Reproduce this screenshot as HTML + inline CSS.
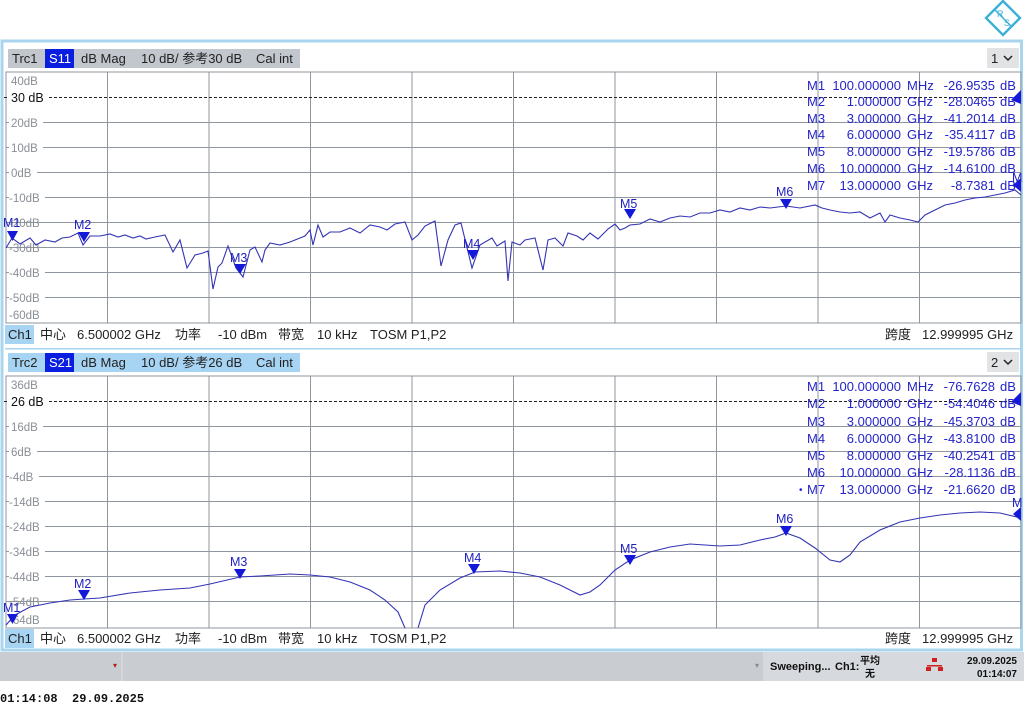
<!DOCTYPE html>
<html><head><meta charset="utf-8"><style>
html,body{margin:0;padding:0;background:#fff;width:1024px;height:706px;overflow:hidden}
svg{display:block}
text{font-family:"Liberation Sans","Noto Sans CJK SC",sans-serif}
.ax{font-size:11.5px;fill:#8a8f96}
.hd{font-size:13px;fill:#222}
.mk{font-size:13px;fill:#2424c8}
.ml{font-size:12.5px;fill:#2020c0}
</style></head><body>
<svg width="1024" height="706" viewBox="0 0 1024 706" xmlns="http://www.w3.org/2000/svg">
<!-- logo -->
<g transform="translate(1003,18)">
<rect x="-12" y="-12" width="24" height="24" transform="rotate(45)" fill="none" stroke="#3ab0d8" stroke-width="2.4"/>
<line x1="-8" y1="-8" x2="8" y2="8" stroke="#3ab0d8" stroke-width="1.5"/>
<text x="-6" y="-1" font-size="9" fill="#3ab0d8">R</text><text x="1" y="8" font-size="9" fill="#3ab0d8">S</text>
</g>
<!-- outer frame -->
<rect x="2" y="41" width="1019.5" height="609" fill="#fff" stroke="#a9d6ee" stroke-width="3"/>
<!-- ===== Panel 1 ===== -->
<rect x="8" y="49" width="292" height="19" fill="#c2c6cd"/>
<rect x="45" y="49" width="29" height="19" fill="#0a1ee0"/>
<text class="hd" x="12" y="63">Trc1</text>
<text class="hd" x="49" y="63" style="fill:#fff">S11</text>
<text class="hd" x="81" y="63">dB Mag</text>
<text class="hd" x="141" y="63">10 dB/ 参考30 dB</text>
<text class="hd" x="256" y="63">Cal int</text>
<rect x="987" y="48" width="32" height="20" fill="#e2e3e5"/>
<text class="hd" x="991" y="63">1</text>
<path d="M1004 56 l4 4 l4 -4" fill="none" stroke="#222" stroke-width="1.5"/>
<rect x="6" y="72" width="1015" height="251" fill="none" stroke="#8f969f" stroke-width="1"/>
<g stroke="#8f969f" stroke-width="1">
<line x1="107.5" y1="72" x2="107.5" y2="323"/><line x1="209" y1="72" x2="209" y2="323"/><line x1="310.5" y1="72" x2="310.5" y2="323"/><line x1="412" y1="72" x2="412" y2="323"/><line x1="513.5" y1="72" x2="513.5" y2="323"/><line x1="615" y1="72" x2="615" y2="323"/><line x1="716.5" y1="72" x2="716.5" y2="323"/><line x1="818" y1="72" x2="818" y2="323"/><line x1="919.5" y1="72" x2="919.5" y2="323"/>
<line x1="6" y1="122.5" x2="1021" y2="122.5"/><line x1="6" y1="147.5" x2="1021" y2="147.5"/><line x1="6" y1="172.5" x2="1021" y2="172.5"/><line x1="6" y1="197.5" x2="1021" y2="197.5"/><line x1="6" y1="222.5" x2="1021" y2="222.5"/><line x1="6" y1="247.5" x2="1021" y2="247.5"/><line x1="6" y1="272.5" x2="1021" y2="272.5"/><line x1="6" y1="297.5" x2="1021" y2="297.5"/>
</g>
<line x1="4" y1="97.5" x2="1021" y2="97.5" stroke="#222" stroke-dasharray="3,2"/>
<g>
<rect x="9" y="75" width="32" height="12" fill="#fff"/><text class="ax" x="11" y="85">40dB</text>
<rect x="9" y="91" width="38" height="13" fill="#fff"/><text x="11" y="102" font-size="12.5" fill="#111">30 dB</text>
<rect x="9" y="116" width="34" height="12" fill="#fff"/><text class="ax" x="11" y="127">20dB</text>
<rect x="9" y="141" width="34" height="12" fill="#fff"/><text class="ax" x="11" y="152">10dB</text>
<rect x="9" y="166" width="28" height="12" fill="#fff"/><text class="ax" x="11" y="177">0dB</text>
<rect x="9" y="191" width="36" height="12" fill="#fff"/><text class="ax" x="9" y="202">-10dB</text>
<text class="ax" x="9" y="227">-20dB</text>
<text class="ax" x="9" y="252">-30dB</text>
<rect x="9" y="266" width="36" height="12" fill="#fff"/><text class="ax" x="9" y="277">-40dB</text>
<rect x="9" y="291" width="36" height="12" fill="#fff"/><text class="ax" x="9" y="302">-50dB</text>
<rect x="9" y="309" width="36" height="12" fill="#fff"/><text class="ax" x="9" y="319">-60dB</text>
</g>
<polyline fill="none" stroke="#3434b4" stroke-width="1.1" points="6,248 12,238 20,244 30,238 36,245 45,240 55,242 62,238 70,237 78,233 83,245 90,236 100,236 110,234 118,237 125,235 133,238 140,236 146,239 155,237 165,235 173,252 180,240 187,268 195,255 203,253 208,251 213,289 218,267 222,263 228,246 236,268 243,277 250,250 255,247 262,262 265,250 270,243 280,245 290,242 300,238 305,236 310,230 313,245 318,225 323,237 330,232 340,232 350,228 360,233 370,225 380,227 387,230 395,224 405,222 412,240 418,235 425,226 435,221 441,266 448,240 455,225 461,223 472,268 480,245 492,238 497,246 505,241 508,281 512,242 520,245 525,240 535,238 543,270 548,240 555,238 563,246 568,233 577,236 583,240 590,233 598,239 608,229 615,224 620,230 625,228 630,225 640,224 650,219 660,222 670,218 680,216 690,217 700,213 710,213 720,210 730,212 740,208 750,210 760,207 770,208 786,206 800,208 815,205 822,208 830,210 840,212 850,213 860,212 870,218 880,213 885,222 890,215 900,218 910,220 918,222 925,215 935,210 945,205 955,203 965,200 975,198 985,197 995,195 1005,193 1015,190 1021,195"/>
<g fill="#1418d8">
<path d="M7,231 h11 l-5.5,10z"/><path d="M78,232 h12 l-6,10z"/><path d="M234,264 h12 l-6,10z"/><path d="M467,250 h12 l-6,10z"/><path d="M624,209 h12 l-6,10z"/><path d="M780,199 h12 l-6,10z"/><path d="M1021,178 v14 l-8,-7z"/><path d="M1021,90 v14 l-10,-4z"/>
</g>
<g class="ml"><text x="3" y="227">M1</text><text x="74" y="229">M2</text><text x="230" y="262">M3</text><text x="463" y="248">M4</text><text x="620" y="208">M5</text><text x="776" y="196">M6</text><text x="1012" y="182">M</text></g>
<g class="mk">
<text x="807" y="90">M1</text><text x="807" y="106">M2</text><text x="807" y="123">M3</text><text x="807" y="139">M4</text><text x="807" y="156">M5</text><text x="807" y="173">M6</text><text x="807" y="190">M7</text>
<g text-anchor="end"><text x="901" y="90">100.000000</text><text x="901" y="106">1.000000</text><text x="901" y="123">3.000000</text><text x="901" y="139">6.000000</text><text x="901" y="156">8.000000</text><text x="901" y="173">10.000000</text><text x="901" y="190">13.000000</text>
<text x="995" y="90">-26.9535</text><text x="995" y="106">-28.0465</text><text x="995" y="123">-41.2014</text><text x="995" y="139">-35.4117</text><text x="995" y="156">-19.5786</text><text x="995" y="173">-14.6100</text><text x="995" y="190">-8.7381</text></g>
<text x="907" y="90">MHz</text><text x="907" y="106">GHz</text><text x="907" y="123">GHz</text><text x="907" y="139">GHz</text><text x="907" y="156">GHz</text><text x="907" y="173">GHz</text><text x="907" y="190">GHz</text>
<text x="1000" y="90">dB</text><text x="1000" y="106">dB</text><text x="1000" y="123">dB</text><text x="1000" y="139">dB</text><text x="1000" y="156">dB</text><text x="1000" y="173">dB</text><text x="1000" y="190">dB</text>
</g>
<rect x="5" y="325" width="29" height="19" fill="#a6d4f2"/>
<g class="hd">
<text x="8" y="339">Ch1</text>
<text x="40" y="339">中心</text><text x="77" y="339">6.500002 GHz</text><text x="175" y="339">功率</text><text x="218" y="339">-10 dBm</text><text x="278" y="339">带宽</text><text x="317" y="339">10 kHz</text><text x="370" y="339">TOSM P1,P2</text>
<text x="885" y="339">跨度</text><text x="922" y="339">12.999995 GHz</text>
</g>
<!-- ===== Panel 2 ===== -->
<rect x="5" y="348" width="1016" height="1.5" fill="#a9d6ee"/>
<rect x="8" y="353" width="292" height="19" fill="#a6d4f2"/>
<rect x="45" y="353" width="29" height="19" fill="#0a1ee0"/>
<text class="hd" x="12" y="367">Trc2</text>
<text class="hd" x="49" y="367" style="fill:#fff">S21</text>
<text class="hd" x="81" y="367">dB Mag</text>
<text class="hd" x="141" y="367">10 dB/ 参考26 dB</text>
<text class="hd" x="256" y="367">Cal int</text>
<rect x="987" y="352" width="32" height="20" fill="#e2e3e5"/>
<text class="hd" x="991" y="367">2</text>
<path d="M1004 360 l4 4 l4 -4" fill="none" stroke="#222" stroke-width="1.5"/>
<rect x="6" y="376" width="1015" height="252" fill="none" stroke="#8f969f" stroke-width="1"/>
<g stroke="#8f969f" stroke-width="1">
<line x1="107.5" y1="376" x2="107.5" y2="628"/><line x1="209" y1="376" x2="209" y2="628"/><line x1="310.5" y1="376" x2="310.5" y2="628"/><line x1="412" y1="376" x2="412" y2="628"/><line x1="513.5" y1="376" x2="513.5" y2="628"/><line x1="615" y1="376" x2="615" y2="628"/><line x1="716.5" y1="376" x2="716.5" y2="628"/><line x1="818" y1="376" x2="818" y2="628"/><line x1="919.5" y1="376" x2="919.5" y2="628"/>
<line x1="6" y1="426.5" x2="1021" y2="426.5"/><line x1="6" y1="451.5" x2="1021" y2="451.5"/><line x1="6" y1="476.5" x2="1021" y2="476.5"/><line x1="6" y1="501.5" x2="1021" y2="501.5"/><line x1="6" y1="526.5" x2="1021" y2="526.5"/><line x1="6" y1="551.5" x2="1021" y2="551.5"/><line x1="6" y1="576.5" x2="1021" y2="576.5"/><line x1="6" y1="601.5" x2="1021" y2="601.5"/>
</g>
<line x1="4" y1="401.5" x2="1021" y2="401.5" stroke="#222" stroke-dasharray="3,2"/>
<g>
<rect x="9" y="379" width="32" height="12" fill="#fff"/><text class="ax" x="11" y="389">36dB</text>
<rect x="9" y="395" width="38" height="13" fill="#fff"/><text x="11" y="406" font-size="12.5" fill="#111">26 dB</text>
<rect x="9" y="420" width="34" height="12" fill="#fff"/><text class="ax" x="11" y="431">16dB</text>
<rect x="9" y="445" width="28" height="12" fill="#fff"/><text class="ax" x="11" y="456">6dB</text>
<rect x="9" y="470" width="30" height="12" fill="#fff"/><text class="ax" x="9" y="481">-4dB</text>
<rect x="9" y="495" width="36" height="12" fill="#fff"/><text class="ax" x="9" y="506">-14dB</text>
<rect x="9" y="520" width="36" height="12" fill="#fff"/><text class="ax" x="9" y="531">-24dB</text>
<rect x="9" y="545" width="36" height="12" fill="#fff"/><text class="ax" x="9" y="556">-34dB</text>
<rect x="9" y="570" width="36" height="12" fill="#fff"/><text class="ax" x="9" y="581">-44dB</text>
<text class="ax" x="9" y="606">-54dB</text>
<text class="ax" x="9" y="624">-64dB</text>
</g>
<polyline fill="none" stroke="#3434b4" stroke-width="1.1" points="6,625 15,615 30,607 50,603 70,600 84,599 100,598 130,593 160,590 190,588 210,584 240,577 260,576 290,574 310,575 330,577 350,582 370,590 385,600 398,612 405,628"/>
<polyline fill="none" stroke="#3434b4" stroke-width="1.1" points="418,628 425,605 440,590 460,578 475,572 500,571 520,573 540,577 560,585 580,595 590,592 600,585 615,570 630,560 650,552 670,547 690,544 705,545 720,546 740,545 760,540 775,537 786,533 800,538 815,548 830,560 840,562 850,555 860,542 880,530 900,522 920,518 940,515 960,513 980,512 1000,513 1021,518"/>
<g fill="#1418d8">
<path d="M7,614 h11 l-5.5,10z"/><path d="M78,590 h12 l-6,10z"/><path d="M234,569 h12 l-6,10z"/><path d="M468,564 h12 l-6,10z"/><path d="M624,555 h12 l-6,10z"/><path d="M780,526 h12 l-6,10z"/><path d="M1021,507 v14 l-8,-7z"/><path d="M1021,392 v14 l-10,-4z"/>
</g>
<g class="ml"><text x="3" y="612">M1</text><text x="74" y="588">M2</text><text x="230" y="566">M3</text><text x="464" y="562">M4</text><text x="620" y="553">M5</text><text x="776" y="523">M6</text><text x="1012" y="507">M</text></g>
<g class="mk">
<text x="807" y="391">M1</text><text x="807" y="408">M2</text><text x="807" y="426">M3</text><text x="807" y="443">M4</text><text x="807" y="460">M5</text><text x="807" y="477">M6</text><text x="807" y="494">M7</text><text x="799" y="493" font-size="10">•</text>
<g text-anchor="end"><text x="901" y="391">100.000000</text><text x="901" y="408">1.000000</text><text x="901" y="426">3.000000</text><text x="901" y="443">6.000000</text><text x="901" y="460">8.000000</text><text x="901" y="477">10.000000</text><text x="901" y="494">13.000000</text>
<text x="995" y="391">-76.7628</text><text x="995" y="408">-54.4046</text><text x="995" y="426">-45.3703</text><text x="995" y="443">-43.8100</text><text x="995" y="460">-40.2541</text><text x="995" y="477">-28.1136</text><text x="995" y="494">-21.6620</text></g>
<text x="907" y="391">MHz</text><text x="907" y="408">GHz</text><text x="907" y="426">GHz</text><text x="907" y="443">GHz</text><text x="907" y="460">GHz</text><text x="907" y="477">GHz</text><text x="907" y="494">GHz</text>
<text x="1000" y="391">dB</text><text x="1000" y="408">dB</text><text x="1000" y="426">dB</text><text x="1000" y="443">dB</text><text x="1000" y="460">dB</text><text x="1000" y="477">dB</text><text x="1000" y="494">dB</text>
</g>
<rect x="5" y="629" width="29" height="19" fill="#a6d4f2"/>
<g class="hd">
<text x="8" y="643">Ch1</text>
<text x="40" y="643">中心</text><text x="77" y="643">6.500002 GHz</text><text x="175" y="643">功率</text><text x="218" y="643">-10 dBm</text><text x="278" y="643">带宽</text><text x="317" y="643">10 kHz</text><text x="370" y="643">TOSM P1,P2</text>
<text x="885" y="643">跨度</text><text x="922" y="643">12.999995 GHz</text>
</g>
<!-- status bar -->
<rect x="0" y="652" width="1024" height="29" fill="#c9ccd1"/>
<rect x="763" y="652" width="261" height="29" fill="#d6d9dd"/>
<line x1="122" y1="652" x2="122" y2="681" stroke="#dfe1e4"/>
<text x="113" y="668" font-size="8" fill="#b02020">▾</text>
<text x="755" y="668" font-size="8" fill="#888">▾</text>
<text x="770" y="670" font-size="11" fill="#111" font-weight="bold">Sweeping...</text>
<text x="835" y="670" font-size="11" fill="#111" font-weight="bold">Ch1:</text>
<text x="860" y="664" font-size="10" fill="#111" font-weight="bold">平均</text>
<text x="865" y="677" font-size="10" fill="#111" font-weight="bold">无</text>
<g fill="#d02020"><rect x="932" y="658" width="5" height="4"/><rect x="927" y="665" width="15" height="1.5"/><rect x="926" y="667" width="5" height="4"/><rect x="938" y="667" width="5" height="4"/></g>
<text x="1017" y="664" font-size="10" fill="#111" font-weight="bold" text-anchor="end">29.09.2025</text>
<text x="1017" y="677" font-size="10" fill="#111" font-weight="bold" text-anchor="end">01:14:07</text>
<text x="0" y="702" font-size="12" fill="#111" font-weight="bold" style="font-family:'Liberation Mono',monospace" xml:space="preserve">01:14:08  29.09.2025</text>
</svg>
</body></html>
